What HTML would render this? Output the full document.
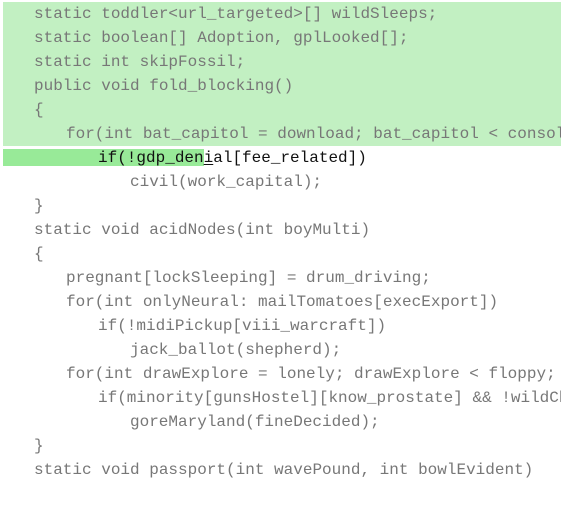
<!DOCTYPE html>
<html><head><style>
body{margin:0;background:#fff;width:561px;height:505px;overflow:hidden;position:relative;font-family:"Liberation Mono",monospace;font-size:16px;color:#777}
.sel{position:absolute;left:3px;top:2px;width:558px;height:144px;background:#c2f0c2}
.sel2{position:absolute;left:3px;top:149px;width:201px;height:17px;background:#98ea98}
.l{position:absolute;left:34px;height:24px;line-height:24px;white-space:pre}
.cur{color:#111}
u{text-decoration:underline;text-underline-offset:2px}
</style></head><body>
<div class="sel"></div><div class="sel2"></div>
<div class="l" style="top:2px">static toddler&lt;url_targeted&gt;[] wildSleeps;</div>
<div class="l" style="top:26px">static boolean[] Adoption, gplLooked[];</div>
<div class="l" style="top:50px">static int skipFossil;</div>
<div class="l" style="top:74px">public void fold_blocking()</div>
<div class="l" style="top:98px">{</div>
<div class="l" style="top:122px;left:66px">for(int bat_capitol = download; bat_capitol &lt; console</div>
<div class="l cur" style="top:146px;left:98px">if(!gdp_den<u>i</u>al[fee_related])</div>
<div class="l" style="top:170px;left:130px">civil(work_capital);</div>
<div class="l" style="top:194px">}</div>
<div class="l" style="top:218px">static void acidNodes(int boyMulti)</div>
<div class="l" style="top:242px">{</div>
<div class="l" style="top:266px;left:66px">pregnant[lockSleeping] = drum_driving;</div>
<div class="l" style="top:290px;left:66px">for(int onlyNeural: mailTomatoes[execExport])</div>
<div class="l" style="top:314px;left:98px">if(!midiPickup[viii_warcraft])</div>
<div class="l" style="top:338px;left:130px">jack_ballot(shepherd);</div>
<div class="l" style="top:362px;left:66px">for(int drawExplore = lonely; drawExplore &lt; floppy;</div>
<div class="l" style="top:386px;left:98px">if(minority[gunsHostel][know_prostate] &amp;&amp; !wildCh</div>
<div class="l" style="top:410px;left:130px">goreMaryland(fineDecided);</div>
<div class="l" style="top:434px">}</div>
<div class="l" style="top:458px">static void passport(int wavePound, int bowlEvident)</div>
</body></html>
